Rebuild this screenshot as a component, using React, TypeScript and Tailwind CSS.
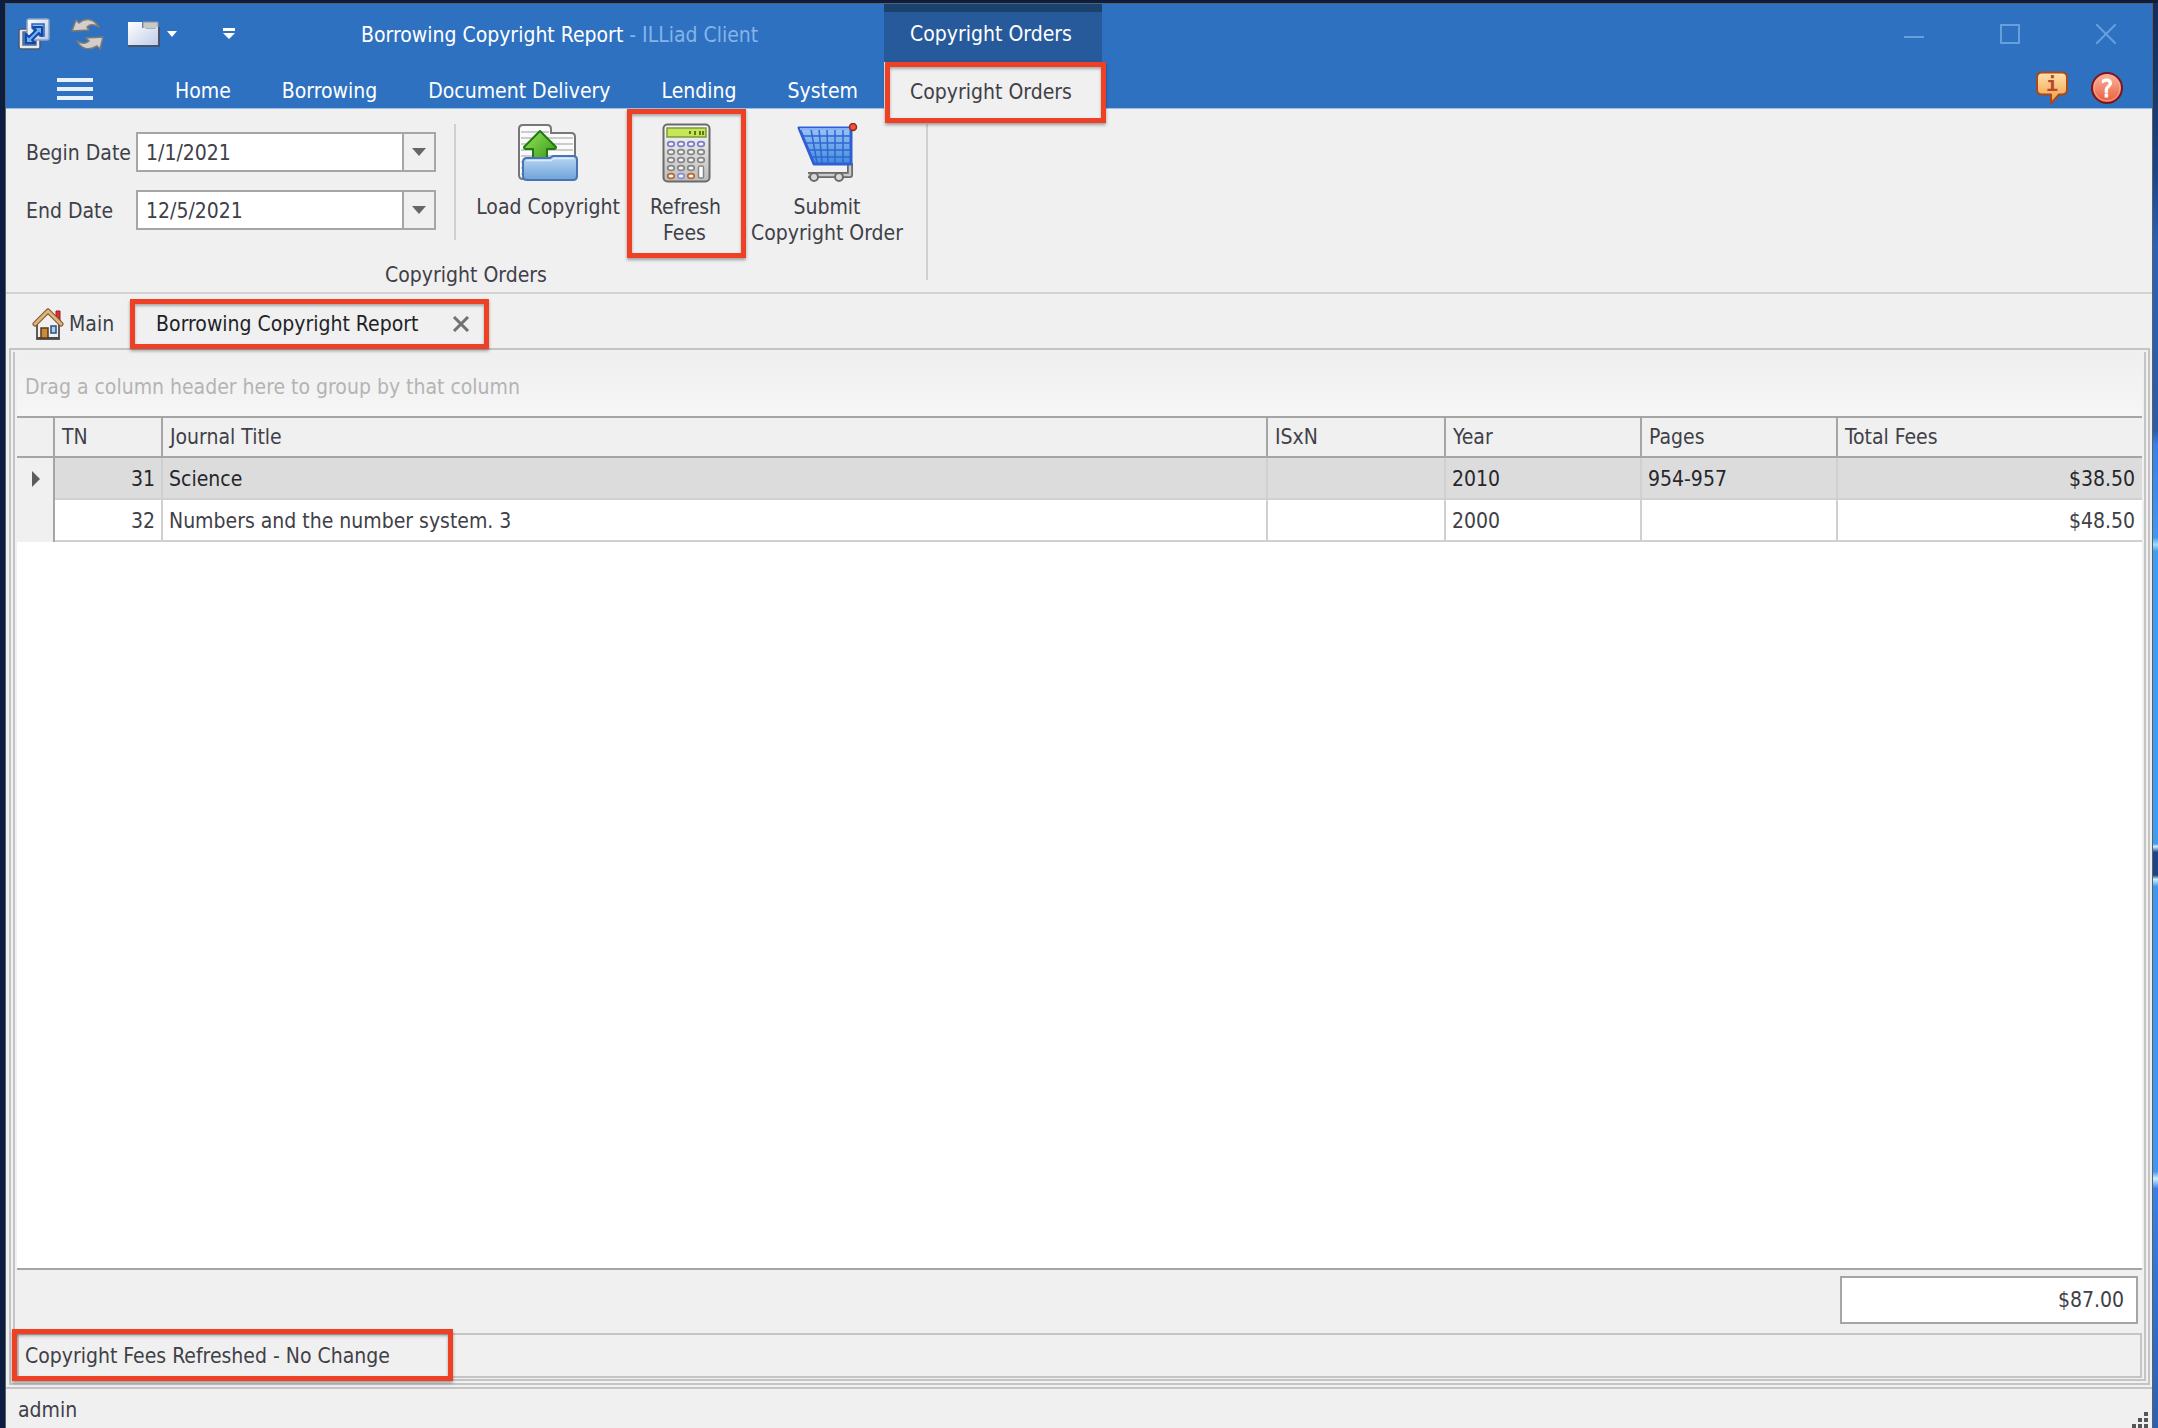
import React, { useState } from 'react';

interface Order {
  tn: number;
  title: string;
  isxn: string;
  year: string;
  pages: string;
  fees: number;
}

const orders: Order[] = [
  { tn: 31, title: 'Science', isxn: '', year: '2010', pages: '954-957', fees: 38.5 },
  { tn: 32, title: 'Numbers and the number system. 3', isxn: '', year: '2000', pages: '', fees: 48.5 },
];

const menuTabs = ['Home', 'Borrowing', 'Document Delivery', 'Lending', 'System'];

const money = (n: number) => `$${n.toFixed(2)}`;

// Red callout frame, laid over the element it points out
function Callout({ className }: { className: string }) {
  return (
    <span
      className={`pointer-events-none absolute z-10 border-[5px] border-[#ee4024] shadow-[0_2px_3px_rgba(0,0,0,0.35),inset_0_2px_3px_rgba(0,0,0,0.3)] ${className}`}
    />
  );
}

function PopOutIcon() {
  return (
    <svg width="34" height="34" viewBox="0 0 34 34">
      <defs>
        <linearGradient id="popout" x1="0" y1="0" x2="1" y2="1">
          <stop offset="0" stopColor="#ffffff" />
          <stop offset="1" stopColor="#b9c9e6" />
        </linearGradient>
      </defs>
      <rect x="2" y="12" width="21" height="20" rx="2" fill="#e4e9f2" stroke="#4c5a70" strokeWidth="1.5" />
      <rect x="6" y="15" width="13" height="13" fill="#3a70bd" stroke="#5b6c88" strokeWidth="1.5" />
      <rect x="10" y="2" width="22" height="21" rx="2" fill="url(#popout)" stroke="#8fa2c4" strokeWidth="1.5" />
      <path d="M15 7h12v12h-4l-8-8z" fill="#8fc4f5" stroke="#2f62b4" strokeWidth="1.5" />
      <path d="M9 26v-9l3 3 7-7-3-3h9v9l-3-3-7 7 3 3z" fill="#6fb4f0" stroke="#1546a8" strokeWidth="2" strokeLinejoin="round" />
    </svg>
  );
}

function RefreshIcon() {
  return (
    <svg width="34" height="34" viewBox="0 0 34 34" fill="#d2cec9" stroke="#7d7a78" strokeWidth="1.5" strokeLinejoin="round">
      <path d="M1 14 5 3l3 3c7-6 15-4 20 4-5-3-9-3-12 0l2 3z" />
      <path d="M32 20l-3 12-3-3c-8 5-16 3-20-5 5 3 9 3 12 0l-3-3z" />
    </svg>
  );
}

function FolderIcon() {
  return (
    <svg width="34" height="28" viewBox="0 0 34 28">
      <defs>
        <linearGradient id="folder" x1="0" y1="0" x2="1" y2="1">
          <stop offset="0" stopColor="#ffffff" />
          <stop offset="1" stopColor="#bccbe8" />
        </linearGradient>
      </defs>
      <path d="M16 2h15v7H16z" fill="#c9c9c9" stroke="#8e959e" />
      <path d="M1 2h14v6h3l1 1h9l2-2h2v19H1z" fill="url(#folder)" />
      <path d="M32 7v19H1" fill="none" stroke="#46536a" strokeWidth="2" />
    </svg>
  );
}

function InfoIcon() {
  return (
    <svg width="32" height="34" viewBox="0 0 32 34">
      <defs>
        <linearGradient id="info" x1="0" y1="0" x2="0" y2="1">
          <stop offset="0" stopColor="#fde3b0" />
          <stop offset="1" stopColor="#f39a3a" />
        </linearGradient>
      </defs>
      <path
        d="M6 1.500h20q5 0 5 5v12q0 5-5 5h-3l-8 9v-9H6q-5 0-5-5v-12q0-5 5-5z"
        fill="url(#info)"
        stroke="#a8481c"
        strokeWidth="2"
        strokeLinejoin="round"
      />
      <text x="16" y="20" textAnchor="middle" fontSize="20" fontWeight="bold" fontFamily="DejaVu Sans Mono, monospace" fill="#b8472c">
        i
      </text>
    </svg>
  );
}

function HelpIcon() {
  return (
    <svg width="34" height="34" viewBox="0 0 34 34">
      <defs>
        <linearGradient id="help" x1="0" y1="0" x2="0" y2="1">
          <stop offset="0" stopColor="#f8b9a4" />
          <stop offset="1" stopColor="#ea5a38" />
        </linearGradient>
      </defs>
      <circle cx="17" cy="17" r="15" fill="url(#help)" stroke="#7d1418" strokeWidth="2" />
      <circle cx="17" cy="17" r="13" fill="none" stroke="#f6a795" strokeWidth="1" />
      <text x="17" y="26" textAnchor="middle" fontSize="25" fontFamily="DejaVu Sans Condensed, sans-serif" fill="#ffffff" stroke="#ffffff">
        ?
      </text>
    </svg>
  );
}

function LoadIcon() {
  return (
    <svg width="60" height="58" viewBox="0 0 60 58">
      <defs>
        <linearGradient id="loadFront" x1="0" y1="0" x2="0" y2="1">
          <stop offset="0" stopColor="#b9d8f5" />
          <stop offset="1" stopColor="#6fa3d8" />
        </linearGradient>
        <linearGradient id="loadArrow" x1="0" y1="0" x2="1" y2="1">
          <stop offset="0" stopColor="#9be65c" />
          <stop offset="1" stopColor="#2e9414" />
        </linearGradient>
      </defs>
      <path d="M5 1h24q4 0 4 4v4h20q4 0 4 4v42H5q-4 0-4-4V5q0-4 4-4z" fill="#fbfbfb" stroke="#777777" strokeWidth="2" />
      <path d="M3 8h28M3 14h52M3 20h52M3 26h52M3 32h52M3 38h4M3 44h3M3 50h3" stroke="#bdbdbd" strokeWidth="1.5" />
      <path d="M22 7 38 23q0 2-2 2h-7v13H15V25H8q-2 0-2-2z" fill="url(#loadArrow)" stroke="#1f7a12" strokeWidth="2" strokeLinejoin="round" />
      <path d="M9 34h23l3-2h20q4 0 4 4v16q0 4-4 4H9q-4 0-4-4V38q0-4 4-4z" fill="url(#loadFront)" stroke="#4a72b4" strokeWidth="2" />
      <path d="M8 36.500h25l3-2h20" fill="none" stroke="#dcecfb" strokeWidth="1.500" />
    </svg>
  );
}

function CalculatorIcon() {
  const cols = [9, 19, 29, 39];
  const rows = [21, 29, 37, 45, 53];
  const ring = (r: number, c: number) => {
    if (r === 0) return '#7a7cc8';
    if (r === 4) return c === 1 ? '#8a8ce0' : '#b8692c';
    return '#858585';
  };
  return (
    <svg width="50" height="60" viewBox="0 0 50 60">
      <defs>
        <linearGradient id="calc" x1="0" y1="0" x2="0" y2="1">
          <stop offset="0" stopColor="#fafafa" />
          <stop offset="1" stopColor="#bcbcbc" />
        </linearGradient>
      </defs>
      <rect x="1.500" y="1.500" width="46" height="57" rx="4" fill="url(#calc)" stroke="#6b6b6b" strokeWidth="2" />
      <rect x="5" y="5" width="39" height="9" fill="#c4e658" stroke="#7d9a38" strokeWidth="1.500" />
      <path d="M28 8v3M33 8v4M38 8v4M41 8v4" stroke="#5c7a18" strokeWidth="2" />
      {rows.map((y, r) =>
        cols.map((x, c) =>
          c === 3 && r > 2 ? null : (
            <ellipse key={`${r}-${c}`} cx={x} cy={y} rx="3.300" ry="2.400" fill="#f4f4f4" stroke={ring(r, c)} strokeWidth="1.700" />
          ),
        ),
      )}
      <rect x="36.500" y="43" width="5" height="12" rx="1.500" fill="#ffffff" stroke="#858585" strokeWidth="1.500" />
    </svg>
  );
}

function CartIcon() {
  return (
    <svg width="62" height="60" viewBox="0 0 62 60">
      <defs>
        <linearGradient id="cart" x1="0" y1="0" x2="0" y2="1">
          <stop offset="0" stopColor="#9cc4f6" />
          <stop offset="1" stopColor="#3f8bdc" />
        </linearGradient>
      </defs>
      <path d="M54 40v12H12" fill="none" stroke="#6a6a6a" strokeWidth="6" strokeLinejoin="round" />
      <path d="M54 40v12H12" fill="none" stroke="#c9c9c9" strokeWidth="2.500" strokeLinejoin="round" />
      <path d="M3 5h52v36H18z" fill="url(#cart)" stroke="#2f5fd4" strokeWidth="3" strokeLinejoin="round" />
      <path d="M15 6l6 34M23 6l3 34M31 6l1 34M39 6v34M47 6v34M7 13h47M10 20h44M13 27h41M15 34h39" stroke="#2f66d4" strokeWidth="1.500" />
      <path d="M4 6h50" stroke="#86b0f8" strokeWidth="2" />
      <circle cx="18" cy="54" r="4" fill="#d8d8d8" stroke="#6a6a6a" strokeWidth="2" />
      <circle cx="43" cy="54" r="4" fill="#d8d8d8" stroke="#6a6a6a" strokeWidth="2" />
      <circle cx="57" cy="4" r="3.500" fill="#e8573c" stroke="#96281a" strokeWidth="1.500" />
    </svg>
  );
}

function HouseIcon() {
  return (
    <svg width="32" height="34" viewBox="0 0 32 34">
      <path d="M24 4h4v10h-4z" fill="#d9303a" stroke="#a01822" />
      <path d="M5 15 16 6l11 9v17H5z" fill="#f1f1f1" stroke="#5c5c5c" strokeWidth="2" />
      <path d="M5 31h22" stroke="#4b4b4b" strokeWidth="2" />
      <rect x="9" y="21" width="7" height="10" fill="#c98a3c" stroke="#5e3a12" strokeWidth="1.500" />
      <rect x="19" y="19" width="5" height="7" fill="#a9d2f5" stroke="#2d4f80" strokeWidth="1.500" />
      <path d="M3 17 16 4 29 17" fill="none" stroke="#7a5430" strokeWidth="5" strokeLinecap="round" strokeLinejoin="round" />
      <path d="M3 17 16 4 29 17" fill="none" stroke="#e2b478" strokeWidth="3" strokeLinecap="round" strokeLinejoin="round" />
    </svg>
  );
}

function Caret({ className }: { className: string }) {
  return (
    <svg width="14" height="8" viewBox="0 0 14 8" className={className}>
      <path d="M0 0h14L7 8z" fill="currentColor" />
    </svg>
  );
}

function DateField({ id, label, value, onChange }: { id: string; label: string; value: string; onChange: (v: string) => void }) {
  return (
    <div className="flex h-10 items-center">
      <label htmlFor={id} className="w-[110px] pt-[2px] whitespace-nowrap">
        {label}
      </label>
      <div className="flex h-10 w-[300px] border-2 border-[#a6a6a6] bg-white">
        <input
          id={id}
          type="text"
          value={value}
          onChange={(e) => onChange(e.target.value)}
          className="min-w-0 flex-1 px-2 pt-[2px] outline-none"
        />
        <button type="button" aria-label={`Choose ${label}`} className="flex w-8 items-center justify-center border-l-2 border-[#a6a6a6] bg-[#f0f0f0]">
          <Caret className="text-[#666666]" />
        </button>
      </div>
    </div>
  );
}

function RibbonButton({ className, icon, children }: { className: string; icon: React.ReactNode; children: React.ReactNode }) {
  return (
    <button type="button" className={`relative flex flex-col items-center pt-[15px] leading-[26px] whitespace-nowrap ${className}`}>
      <span className="mb-3 flex h-[58px] items-center">{icon}</span>
      {children}
    </button>
  );
}

function TitleBar() {
  return (
    <header className="bg-[#2f71c1] text-white">
      <div className="flex h-[58px] items-stretch">
        <div className="flex w-[355px] items-center pt-[2px] pl-[11px]">
          <button type="button" aria-label="Pop out">
            <PopOutIcon />
          </button>
          <button type="button" aria-label="Refresh" className="ml-5">
            <RefreshIcon />
          </button>
          <button type="button" aria-label="New tab" className="ml-[22px] flex items-center gap-[6px]">
            <FolderIcon />
            <svg width="10" height="6" viewBox="0 0 10 6">
              <path d="M0 0h10L5 6z" fill="#ffffff" />
            </svg>
          </button>
          <button type="button" aria-label="Customize toolbar" className="ml-[46px]">
            <svg width="12" height="12" viewBox="0 0 12 12">
              <path d="M0 0h12v3H0zM0 5h12l-6 6z" fill="#ffffff" />
            </svg>
          </button>
        </div>
        <h1 className="w-[523px] self-center pt-1 whitespace-nowrap">
          Borrowing Copyright Report <span className="text-[#84b4ea]">- ILLiad Client</span>
        </h1>
        <div className="flex w-[218px] items-center justify-center border-t-8 border-[#1b416d] bg-[#265a9b] pr-1 pb-[6px]">
          Copyright Orders
        </div>
        <div className="ml-auto flex items-center gap-[76px] pt-[2px] pr-9">
          <button type="button" aria-label="Minimize">
            <svg width="20" height="20" viewBox="0 0 20 20">
              <path d="M0 13h20" stroke="#669fdb" strokeWidth="2" />
            </svg>
          </button>
          <button type="button" aria-label="Maximize">
            <svg width="20" height="20" viewBox="0 0 20 20">
              <path d="M1 1h18v18H1z" fill="none" stroke="#669fdb" strokeWidth="2" />
            </svg>
          </button>
          <button type="button" aria-label="Close">
            <svg width="20" height="20" viewBox="0 0 20 20">
              <path d="M0 0l20 20M20 0L0 20" stroke="#669fdb" strokeWidth="2" />
            </svg>
          </button>
        </div>
      </div>

      <nav className="flex h-[46px] items-stretch">
        <button type="button" aria-label="Menu" className="flex w-[143px] flex-col gap-[5px] pt-4 pl-[51px]">
          <span className="h-1 w-9 bg-[#e8f1fb]" />
          <span className="h-1 w-9 bg-[#e8f1fb]" />
          <span className="h-1 w-9 bg-[#e8f1fb]" />
        </button>
        <div className="flex w-[735px] justify-between px-[26px] pt-3">
          {menuTabs.map((tab) => (
            <button type="button" key={tab} className="whitespace-nowrap">
              {tab}
            </button>
          ))}
        </div>
        {/* the open tab runs one pixel down, over the ribbon's top line */}
        <div className="relative -mb-px">
          <button type="button" className="h-full w-[218px] bg-[#f0f0f0] pt-3 pr-1 text-[#404048]">
            Copyright Orders
          </button>
          <Callout className="top-0 left-px h-[61px] w-[221px]" />
        </div>
        <div className="ml-auto flex items-center gap-[22px] pt-[26px] pr-7 pb-5">
          <button type="button" aria-label="Information">
            <InfoIcon />
          </button>
          <button type="button" aria-label="Help">
            <HelpIcon />
          </button>
        </div>
      </nav>
    </header>
  );
}

function Ribbon() {
  const [beginDate, setBeginDate] = useState('1/1/2021');
  const [endDate, setEndDate] = useState('12/5/2021');

  return (
    <section className="flex h-[186px] items-start border-t border-b-2 border-t-[#9cc0e6] border-b-[#d2d2d2]">
      <div className="w-[920px]">
        <div className="flex h-[153px]">
          <div className="flex w-[448px] flex-col gap-[18px] pt-[23px] pl-[20px]">
            <DateField id="begin-date" label="Begin Date" value={beginDate} onChange={setBeginDate} />
            <DateField id="end-date" label="End Date" value={endDate} onChange={setEndDate} />
          </div>
          <div className="mt-[15px] mr-[13px] h-[116px] w-[2px] bg-[#d0d0d0]" />
          <RibbonButton className="w-[158px]" icon={<LoadIcon />}>
            Load Copyright
          </RibbonButton>
          <RibbonButton className="w-[119px]" icon={<CalculatorIcon />}>
            <span className="pr-[2px]">Refresh</span>
            <span className="pr-1">Fees</span>
            <Callout className="inset-x-0 top-0 h-[149px]" />
          </RibbonButton>
          <RibbonButton className="w-[162px]" icon={<CartIcon />}>
            <span>Submit</span>
            <span>Copyright Order</span>
          </RibbonButton>
        </div>
        <p className="text-center leading-[26px]">Copyright Orders</p>
      </div>
      <div className="mt-[15px] h-[156px] w-[2px] bg-[#d0d0d0]" />
    </section>
  );
}

function DocumentTabs() {
  return (
    <div className="flex h-[54px] items-center pt-[6px] pl-[26px]">
      <button type="button" className="flex items-center gap-[5px]">
        <HouseIcon />
        <span>Main</span>
      </button>
      <div className="relative ml-4 flex h-[50px] w-[359px] items-center justify-between pr-[19px] pl-[26px] text-[#1f1f28]">
        <button type="button" className="whitespace-nowrap">
          Borrowing Copyright Report
        </button>
        <button type="button" aria-label="Close tab">
          <svg width="18" height="16" viewBox="0 0 18 16">
            <path d="M2 1l14 14M16 1L2 15" stroke="#717171" strokeWidth="3" />
          </svg>
        </button>
        <Callout className="inset-0" />
      </div>
    </div>
  );
}

const headClass = 'border-y-2 border-r-2 border-[#a5a5a5] px-[7px] text-left font-normal';
const cellClass = 'border-r-2 border-b-2 border-[#d0d0d0] px-[6px] pt-[2px]';

function OrdersTable() {
  return (
    <table className="w-full table-fixed border-separate border-spacing-0">
      <colgroup>
        <col className="w-[38px]" />
        <col className="w-[108px]" />
        <col />
        <col className="w-[178px]" />
        <col className="w-[196px]" />
        <col className="w-[196px]" />
        <col className="w-[304px]" />
      </colgroup>
      <thead>
        <tr className="h-[42px] bg-[#f0f0f0]">
          <th className={headClass} aria-label="Current row" />
          <th className={headClass}>TN</th>
          <th className={headClass}>Journal Title</th>
          <th className={headClass}>ISxN</th>
          <th className={headClass}>Year</th>
          <th className={headClass}>Pages</th>
          <th className="border-y-2 border-[#a5a5a5] px-[7px] text-left font-normal">Total Fees</th>
        </tr>
      </thead>
      <tbody>
        {orders.map((order, i) => (
          <tr key={order.tn} className={i === 0 ? 'h-[42px] bg-[#dcdcdc] text-[#26262c]' : 'h-[42px] bg-white'}>
            <td className="border-r-2 border-[#a5a5a5] bg-[#f0f0f0]">
              {i === 0 && (
                <svg width="8" height="16" viewBox="0 0 8 16" className="ml-[15px]">
                  <path d="M0 0v16l8-8z" fill="#5c5c5c" />
                </svg>
              )}
            </td>
            <td className={`${cellClass} text-right`}>{order.tn}</td>
            <td className={cellClass}>{order.title}</td>
            <td className={cellClass}>{order.isxn}</td>
            <td className={cellClass}>{order.year}</td>
            <td className={cellClass}>{order.pages}</td>
            <td className="border-b-2 border-[#d0d0d0] px-[7px] pt-[2px] text-right">{money(order.fees)}</td>
          </tr>
        ))}
      </tbody>
    </table>
  );
}

export default function App() {
  const total = orders.reduce((sum, order) => sum + order.fees, 0);

  return (
    <div className="flex min-h-screen bg-[#0b1e40] pt-[3px] pl-[5px] font-['DejaVu_Sans_Condensed','DejaVu_Sans',sans-serif] text-[21px] leading-[26px] text-[#404048]">
      <div className="flex min-w-0 flex-1 flex-col border-x border-t border-[#5b5f66] bg-[#f0f0f0]">
        <TitleBar />
        <Ribbon />
        <DocumentTabs />

        <main className="mr-[2px] mb-[2px] ml-[3px] flex flex-1 flex-col border-2 border-[#c4c4c4] p-[2px]">
          <div className="flex flex-1 flex-col border-x-2 border-b-2 border-[#c4c4c4] px-[2px] pb-px">
            <div className="flex h-16 items-center bg-linear-to-b from-[#efefef] to-[#f6f6f6] pt-[6px] pl-2 text-[#b4b4b4]">
              Drag a column header here to group by that column
            </div>
            <div className="flex-1 border-b-2 border-[#a5a5a5] bg-white">
              <OrdersTable />
            </div>
            <div className="flex h-[63px] items-start justify-end pt-[6px] pr-1">
              <output className="flex h-12 w-[298px] items-center justify-end border-2 border-[#a5a5a5] bg-white pr-3">{money(total)}</output>
            </div>
            <div className="relative flex h-[45px] items-center border-2 border-[#c4c4c4] pl-[6px]">
              <span role="status">Copyright Fees Refreshed - No Change</span>
              <Callout className="-top-[6px] -left-[7px] h-[52px] w-[441px]" />
            </div>
          </div>
        </main>

        <footer className="flex h-[41px] items-center justify-between border-t-2 border-[#c4c4c4] pr-1 pl-3">
          <span className="pt-[2px]">admin</span>
          <svg width="16" height="16" viewBox="0 0 16 16" className="self-end" fill="#555555">
            <path d="M12 0h4v4h-4zM6 6h4v4H6zM12 6h4v4h-4zM0 12h4v4H0zM6 12h4v4H6zM12 12h4v4h-4z" />
          </svg>
        </footer>
      </div>

      {/* sliver of desktop wallpaper showing to the right of the window */}
      <div className="w-[5px] bg-[linear-gradient(to_bottom,#132c5a_0%,#1b4586_12%,#2a62b8_17%,#2a5ca4_30%,#3a80e4_31%,#3f98f0_37.500%,#9be0ff_38%,#3f9cf0_38.500%,#3f9cf0_59%,#c8f0ff_59.200%,#1d4488_59.600%,#1d4488_61.200%,#c8f0ff_61.500%,#3f98f0_62%,#3f98f0_82%,#c8f0ff_82.500%,#3a80e4_83.200%,#2a60b0_100%)]" />
    </div>
  );
}
